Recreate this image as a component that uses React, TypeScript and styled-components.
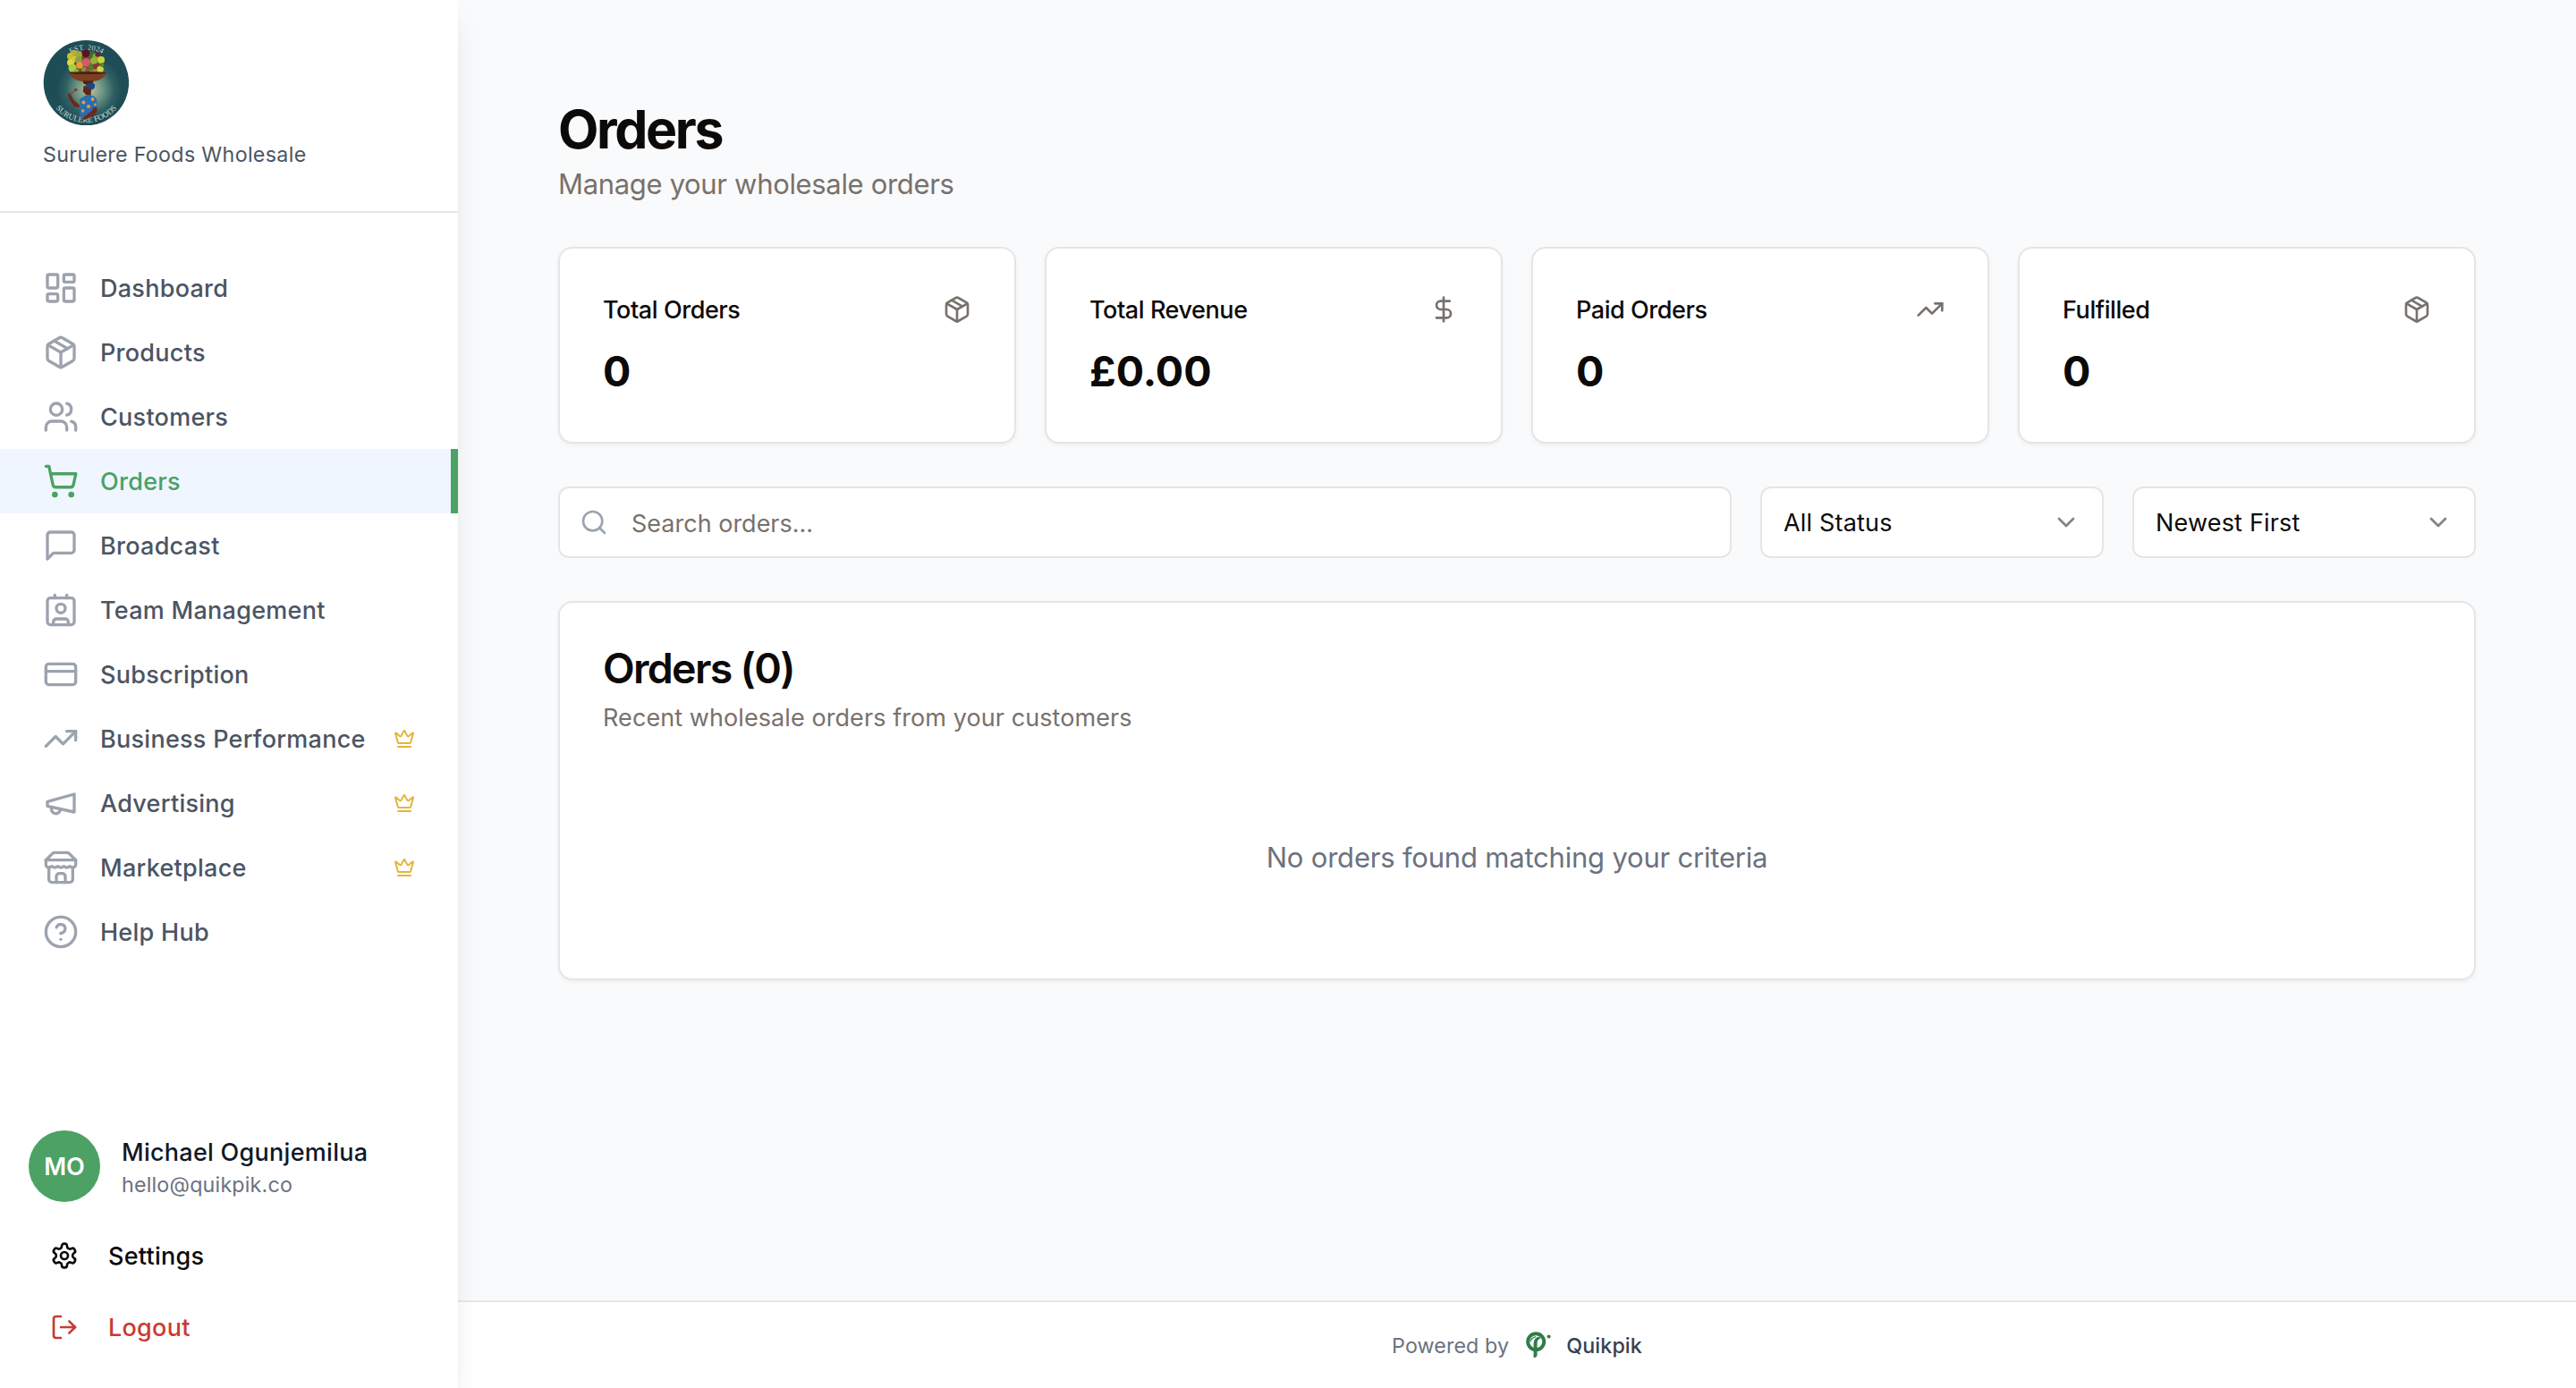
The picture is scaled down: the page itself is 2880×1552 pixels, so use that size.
import React from 'react';
import styled, { createGlobalStyle } from 'styled-components';
import {
  ChevronDown,
  CircleHelp,
  Contact,
  CreditCard,
  Crown,
  DollarSign,
  LayoutDashboard,
  LogOut,
  Package,
  Search,
  ShoppingCart,
  TrendingUp,
  Users,
} from 'lucide-react';

const GlobalStyle = createGlobalStyle`
  *, *::before, *::after { box-sizing: border-box; }
  body {
    margin: 0;
    font-family: Inter, "Liberation Sans", sans-serif;
    font-size: 27px;
    color: #0c0a09;
    background: #f9fafb;
    -webkit-font-smoothing: antialiased;
  }
  h1, h2, h3, p { margin: 0; }
  svg { flex: none; display: block; }
`;

const Shell = styled.div`
  display: flex;
  height: 1552px;
`;

const Sidebar = styled.aside`
  position: relative;
  z-index: 1;
  display: flex;
  flex-direction: column;
  width: 512px;
  flex: none;
  background: #fff;
  box-shadow: 0 20px 30px -6px rgba(0, 0, 0, 0.1), 0 8px 12px -8px rgba(0, 0, 0, 0.1);
`;

const Brand = styled.div`
  padding: 44px 48px 48px;
  border-bottom: 2px solid #e5e7eb;
`;

const BrandName = styled.p`
  margin-top: 18px;
  font-size: 23.25px;
  line-height: 30px;
  letter-spacing: 0.32px;
  color: #4b5563;
`;

const Nav = styled.nav`
  flex: 1;
  padding-top: 48px;
`;

const NavItem = styled.a<{ $active?: boolean }>`
  display: flex;
  align-items: center;
  gap: 24px;
  height: 72px;
  padding: 0 48px;
  font-weight: 500;
  line-height: 40px;
  letter-spacing: 0.27px;
  color: ${(p) => (p.$active ? '#4ca164' : '#4b5563')};
  background: ${(p) => (p.$active ? '#eff6ff' : 'transparent')};
  box-shadow: ${(p) => (p.$active ? 'inset -8px 0 0 #4ca164' : 'none')};

  > svg:first-child {
    color: ${(p) => (p.$active ? '#4ca164' : '#9ca3af')};
  }
`;

const NavLabel = styled.span`
  flex: 1;
  padding-top: 2px;
  white-space: nowrap;
`;

const Account = styled.div`
  padding: 32px;
`;

const Profile = styled.div`
  display: flex;
  align-items: center;
  gap: 24px;
  margin-bottom: 24px;
`;

const Avatar = styled.div`
  display: flex;
  align-items: center;
  justify-content: center;
  width: 80px;
  height: 80px;
  padding-top: 1px;
  border-radius: 50%;
  background: #4ca164;
  color: #fff;
  font-weight: 600;
`;

const ProfileText = styled.div`
  padding-top: 2px;
`;

const ProfileName = styled.p`
  font-weight: 500;
  line-height: 40px;
  letter-spacing: 0.27px;
  color: #111827;
`;

const ProfileMail = styled.p`
  font-size: 23.25px;
  line-height: 32px;
  letter-spacing: 0.2px;
  color: #6b7280;
`;

const AccountActions = styled.div`
  display: grid;
  gap: 8px;
`;

const AccountButton = styled.div<{ $danger?: boolean }>`
  display: flex;
  align-items: center;
  gap: 32px;
  height: 72px;
  padding: 0 24px;
  font-weight: 500;
  line-height: 40px;
  letter-spacing: 0.27px;
  color: ${(p) => (p.$danger ? '#cb3a31' : '#0c0a09')};
`;

const AccountLabel = styled.span`
  padding: 2px 0 0 1px;
`;

const Page = styled.div`
  display: flex;
  flex-direction: column;
  flex: 1;
  min-width: 0;
`;

const Main = styled.main`
  flex: 1;
  padding: 109px 112px 0;
`;

const PageTitle = styled.h1`
  font-size: 59px;
  font-weight: 700;
  line-height: 72px;
  letter-spacing: -2.4px;
`;

const PageLead = styled.p`
  font-size: 31px;
  line-height: 49px;
  letter-spacing: -0.33px;
  color: #78716c;
`;

const Card = styled.section`
  padding: 48px;
  border: 2px solid #e7e5e4;
  border-radius: 16px;
  background: #fff;
  box-shadow: 0 2px 4px rgba(0, 0, 0, 0.05);
`;

const StatGrid = styled.div`
  display: grid;
  grid-template-columns: repeat(4, 1fr);
  gap: 32px;
  margin-top: 46px;
`;

const StatHead = styled.div`
  display: flex;
  align-items: center;
  justify-content: space-between;
  height: 40px;
  color: #78716c;
`;

const StatLabel = styled.h3`
  padding-top: 2px;
  font-size: 27px;
  font-weight: 500;
  line-height: 40px;
  letter-spacing: -0.43px;
  color: #0c0a09;
`;

const StatValue = styled.p`
  margin-top: 18px;
  font-size: 46.5px;
  font-weight: 700;
  line-height: 62px;
`;

const Filters = styled.div`
  display: grid;
  grid-template-columns: 1fr 384px 384px;
  gap: 32px;
  margin: 48px 0;
`;

const Field = styled.div`
  display: flex;
  align-items: center;
  height: 80px;
  padding: 0 24px;
  border: 2px solid #e7e5e4;
  border-radius: 12px;
  background: #fff;
  letter-spacing: 0.18px;
`;

const FieldText = styled.span`
  padding-top: 1px;
`;

const SearchField = styled(Field)`
  gap: 26px;
  padding: 0 22px;
  letter-spacing: 0;
  color: #78716c;

  svg { color: #9ca3af; }
`;

const Placeholder = styled.span`
  padding-top: 2px;
`;

const SelectField = styled(Field)`
  justify-content: space-between;

  svg { opacity: 0.5; }
`;

const CardTitle = styled.h2`
  font-size: 46.5px;
  font-weight: 600;
  line-height: 50px;
  letter-spacing: -1.7px;
`;

const CardText = styled.p`
  margin-top: 11px;
  line-height: 40px;
  letter-spacing: 0.08px;
  color: #78716c;
`;

const Empty = styled.p`
  padding: 112px 0 63px;
  font-size: 31px;
  line-height: 48px;
  letter-spacing: -0.2px;
  text-align: center;
  color: #6b7280;
`;

const Footer = styled.footer`
  display: flex;
  align-items: center;
  justify-content: center;
  gap: 16px;
  height: 98px;
  border-top: 2px solid #e5e7eb;
  background: #fff;
  font-size: 23.25px;
  line-height: 32px;
  letter-spacing: 0.12px;
  color: #6b7280;
`;

const FooterText = styled.span`
  padding-top: 2px;
`;

const FooterBrand = styled(FooterText)`
  font-weight: 500;
  color: #374151;
`;

type IconProps = { size?: number };

function LineIcon({ size = 24, children }: IconProps & { children: React.ReactNode }) {
  return (
    <svg
      width={size}
      height={size}
      viewBox="0 0 24 24"
      fill="none"
      stroke="currentColor"
      strokeWidth="2"
      strokeLinecap="round"
      strokeLinejoin="round"
    >
      {children}
    </svg>
  );
}

const MegaphoneIcon = ({ size }: IconProps) => (
  <LineIcon size={size}>
    <path d="m3 11 18-5v12L3 14v-3z" />
    <path d="M11.6 16.8a3 3 0 1 1-5.8-1.6" />
  </LineIcon>
);

const SpeechIcon = ({ size }: IconProps) => (
  <LineIcon size={size}>
    <path d="M21 15a2 2 0 0 1-2 2H7l-4 4V5a2 2 0 0 1 2-2h14a2 2 0 0 1 2 2z" />
  </LineIcon>
);

const StoreIcon = ({ size }: IconProps) => (
  <LineIcon size={size}>
    <path d="m2 7 4.41-4.41A2 2 0 0 1 7.83 2h8.34a2 2 0 0 1 1.42.59L22 7" />
    <path d="M4 12v8a2 2 0 0 0 2 2h12a2 2 0 0 0 2-2v-8" />
    <path d="M15 22v-4a2 2 0 0 0-2-2h-2a2 2 0 0 0-2 2v4" />
    <path d="M2 7h20" />
    <path d="M22 7v3a2 2 0 0 1-2 2a2.7 2.7 0 0 1-1.59-.63.7.7 0 0 0-.82 0A2.7 2.7 0 0 1 16 12a2.7 2.7 0 0 1-1.59-.63.7.7 0 0 0-.82 0A2.7 2.7 0 0 1 12 12a2.7 2.7 0 0 1-1.59-.63.7.7 0 0 0-.82 0A2.7 2.7 0 0 1 8 12a2.7 2.7 0 0 1-1.59-.63.7.7 0 0 0-.82 0A2.7 2.7 0 0 1 4 12a2 2 0 0 1-2-2V7" />
  </LineIcon>
);

const GearIcon = ({ size }: IconProps) => (
  <LineIcon size={size}>
    <path d="M12.22 2h-.44a2 2 0 0 0-2 2v.18a2 2 0 0 1-1 1.73l-.43.25a2 2 0 0 1-2 0l-.15-.08a2 2 0 0 0-2.73.73l-.22.38a2 2 0 0 0 .73 2.73l.15.1a2 2 0 0 1 1 1.72v.51a2 2 0 0 1-1 1.74l-.15.09a2 2 0 0 0-.73 2.73l.22.38a2 2 0 0 0 2.73.73l.15-.08a2 2 0 0 1 2 0l.43.25a2 2 0 0 1 1 1.73V20a2 2 0 0 0 2 2h.44a2 2 0 0 0 2-2v-.18a2 2 0 0 1 1-1.73l.43-.25a2 2 0 0 1 2 0l.15.08a2 2 0 0 0 2.73-.73l.22-.39a2 2 0 0 0-.73-2.73l-.15-.08a2 2 0 0 1-1-1.74v-.5a2 2 0 0 1 1-1.74l.15-.09a2 2 0 0 0 .73-2.73l-.22-.38a2 2 0 0 0-2.73-.73l-.15.08a2 2 0 0 1-2 0l-.43-.25a2 2 0 0 1-1-1.73V4a2 2 0 0 0-2-2z" />
    <circle cx="12" cy="12" r="3" />
  </LineIcon>
);

const fruits: [number, number, number, string][] = [
  [31, 19, 4, '#c9c22c'], [35, 15, 3.2, '#b9b234'], [40, 17, 4, '#a5a83a'], [31, 26, 4, '#e2d644'],
  [36, 22, 3.4, '#d2c63c'], [40, 23, 4, '#8f9a4a'], [54, 17, 4, '#3c6b35'], [59, 19, 3.5, '#86a83c'],
  [65, 23, 4, '#c8d63a'], [57, 24, 4, '#8fb53c'], [61, 17, 2.6, '#7d1a2e'], [48, 15.6, 4.4, '#5d1020'],
  [33, 32, 4.5, '#a9cf45'], [37, 36, 3, '#8db33c'], [41, 29, 3.8, '#f19a35'], [48.6, 26, 4.8, '#d9566b'],
  [46, 34, 3, '#7a9a38'], [54, 31, 3.2, '#4f7f2f'], [59, 30, 2.8, '#8f2c44'], [64, 33.6, 3.8, '#cdd93e'],
  [50, 35, 2.6, '#b93b55'], [58, 35.6, 2.6, '#c87a3a'], [54, 36.5, 2.2, '#6f9e3c'], [66, 28.6, 2.4, '#6e7b35'],
];

function StoreLogo() {
  return (
    <svg width="96" height="96" viewBox="0 0 96 96">
      <defs>
        <radialGradient id="glow" cx="54%" cy="58%" r="38%">
          <stop offset="0" stopColor="#b9c79d" />
          <stop offset="0.4" stopColor="#6f9584" />
          <stop offset="0.75" stopColor="#2f5f63" />
          <stop offset="1" stopColor="#1f4d56" />
        </radialGradient>
        <path id="arcTop" d="M11.6 48.6 A37 37 0 0 1 85.6 48.6" />
        <path id="arcBottom" d="M4 48.6 A44.5 44.5 0 0 0 93 48.6" />
      </defs>
      <circle cx="48.4" cy="48.6" r="47.7" fill="url(#glow)" />
      <text fontFamily="Liberation Serif, serif" fontSize="8.4" fill="#c9dad6" textAnchor="middle" textLength="37">
        <textPath href="#arcTop" startOffset="50%">EST. 2024</textPath>
      </text>
      <text fontFamily="Liberation Serif, serif" fontSize="9" fill="#c9dad6" textAnchor="middle" textLength="78">
        <textPath href="#arcBottom" startOffset="50%">SURULERE FOODS</textPath>
      </text>
      <path d="M30 20 L34 15 L46 17 L64 19 L67 37 H31 Z" fill="#5d5a2a" />
      {fruits.map(([x, y, r, fill], i) => (
        <circle key={i} cx={x} cy={y} r={r} fill={fill} />
      ))}
      <path d="M29 37 H71 Q69 45 56 47 H44 Q32 45 29 37 Z" fill="#7c3f22" />
      <ellipse cx="50" cy="37.6" rx="21" ry="1.5" fill="#4a2013" />
      <path d="M44 46.5 H57 L55 50 H46 Z" fill="#4b2318" />
      <path d="M47 51 Q52 47 58 50 Q59 55 54.5 56.5 L49 53 Z" fill="#1d4486" />
      <path d="M45.5 52 L49 52.5 L54 56 L53.5 63 L48 62 L46.5 60 L44.8 58.4 Z" fill="#5b281c" />
      <path d="M41 67 L49 62 L57 63.5 Q61.5 67 60.5 75 L55 84 L45 88 L40.5 84 L42 75 Z" fill="#2a6db0" />
      <path d="M40.5 73 L34.5 68 L30.5 60.5 L27.5 60 L29 66.5 L35 75.5 L41.5 76 Z" fill="#6b2a1c" />
      <path d="M29 61.5 L36 57.4" stroke="#8a4a2a" strokeWidth="1.2" />
      <ellipse cx="36.8" cy="56.4" rx="1.8" ry="1.3" fill="#7c3822" />
      <path d="M60.4 76 Q62 82 55 86.5 L46 90 L44.4 88 L54 80.5 L57 76 Z" fill="#6b2a1c" />
      <g fill="#e0a03c">
        <circle cx="45.4" cy="70.4" r="2" />
        <circle cx="55.6" cy="67" r="1.9" />
        <circle cx="51" cy="75" r="2.1" />
        <circle cx="44.6" cy="80" r="1.8" />
        <circle cx="58.4" cy="73" r="1.4" />
      </g>
    </svg>
  );
}

function QuikpikMark() {
  return (
    <svg width="32" height="32" viewBox="0 0 32 32" fill="none">
      <circle cx="14.2" cy="12.2" r="9" stroke="#2f7d46" strokeWidth="4" />
      <path d="M11.6 30.4 V14 Q11.6 8 17.6 6.4 L19.6 8.6 Q15.6 9.6 15.6 14 V27.4 Q15 29.8 11.6 30.4 Z" fill="#2f7d46" />
      <path d="M8 12 Q9 8 14 6.6" stroke="#2f7d46" strokeWidth="1.2" />
      <circle cx="28.6" cy="6.4" r="2" fill="#2f7d46" />
    </svg>
  );
}

const navItems = [
  { label: 'Dashboard', icon: LayoutDashboard },
  { label: 'Products', icon: Package },
  { label: 'Customers', icon: Users },
  { label: 'Orders', icon: ShoppingCart, active: true },
  { label: 'Broadcast', icon: SpeechIcon },
  { label: 'Team Management', icon: Contact },
  { label: 'Subscription', icon: CreditCard },
  { label: 'Business Performance', icon: TrendingUp, premium: true },
  { label: 'Advertising', icon: MegaphoneIcon, premium: true },
  { label: 'Marketplace', icon: StoreIcon, premium: true },
  { label: 'Help Hub', icon: CircleHelp },
];

const stats = [
  { label: 'Total Orders', value: '0', icon: Package },
  { label: 'Total Revenue', value: '£0.00', icon: DollarSign },
  { label: 'Paid Orders', value: '0', icon: TrendingUp },
  { label: 'Fulfilled', value: '0', icon: Package },
];

export default function App() {
  return (
    <Shell>
      <GlobalStyle />
      <Sidebar>
        <Brand>
          <StoreLogo />
          <BrandName>Surulere Foods Wholesale</BrandName>
        </Brand>
        <Nav>
          {navItems.map(({ label, icon: Icon, active, premium }) => (
            <NavItem key={label} $active={active}>
              <Icon size={40} />
              <NavLabel>{label}</NavLabel>
              {premium && <Crown size={24} color="#e3b53c" />}
            </NavItem>
          ))}
        </Nav>
        <Account>
          <Profile>
            <Avatar>MO</Avatar>
            <ProfileText>
              <ProfileName>Michael Ogunjemilua</ProfileName>
              <ProfileMail>hello@quikpik.co</ProfileMail>
            </ProfileText>
          </Profile>
          <AccountActions>
            <AccountButton>
              <GearIcon size={32} />
              <AccountLabel>Settings</AccountLabel>
            </AccountButton>
            <AccountButton $danger>
              <LogOut size={32} />
              <AccountLabel>Logout</AccountLabel>
            </AccountButton>
          </AccountActions>
        </Account>
      </Sidebar>
      <Page>
        <Main>
          <PageTitle>Orders</PageTitle>
          <PageLead>Manage your wholesale orders</PageLead>
          <StatGrid>
            {stats.map(({ label, value, icon: Icon }) => (
              <Card key={label}>
                <StatHead>
                  <StatLabel>{label}</StatLabel>
                  <Icon size={32} />
                </StatHead>
                <StatValue>{value}</StatValue>
              </Card>
            ))}
          </StatGrid>
          <Filters>
            <SearchField>
              <Search size={32} />
              <Placeholder>Search orders...</Placeholder>
            </SearchField>
            <SelectField>
              <FieldText>All Status</FieldText>
              <ChevronDown size={32} />
            </SelectField>
            <SelectField>
              <FieldText>Newest First</FieldText>
              <ChevronDown size={32} />
            </SelectField>
          </Filters>
          <Card>
            <CardTitle>Orders (0)</CardTitle>
            <CardText>Recent wholesale orders from your customers</CardText>
            <Empty>No orders found matching your criteria</Empty>
          </Card>
        </Main>
        <Footer>
          <FooterText>Powered by</FooterText>
          <QuikpikMark />
          <FooterBrand>Quikpik</FooterBrand>
        </Footer>
      </Page>
    </Shell>
  );
}
